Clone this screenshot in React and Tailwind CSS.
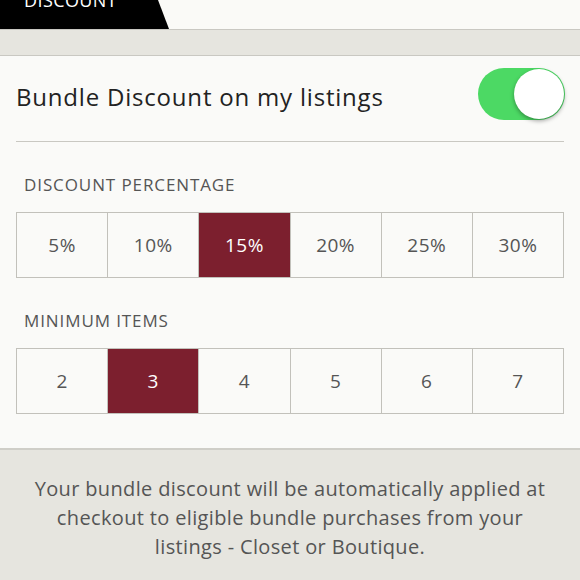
export default function App() {
  const percents = ["5%", "10%", "15%", "20%", "25%", "30%"];
  const items = ["2", "3", "4", "5", "6", "7"];

  const Segments = ({ options, selected }) => (
    <div className="mx-4 flex h-[66px] border border-[#c2c1bb]">
      {options.map((o, i) => (
        <div
          key={o}
          className={`flex flex-1 items-center justify-center text-[19px] tracking-[0.5px] ${
            i > 0 ? "border-l border-[#c2c1bb]" : ""
          } ${o === selected ? "bg-[#7c1f2e] text-white" : "text-[#555]"}`}
        >
          {o}
        </div>
      ))}
    </div>
  );

  return (
    <div
      className="h-[580px] w-[580px] overflow-hidden bg-[#e6e5df]"
      style={{ fontFamily: "'Open Sans', sans-serif" }}
    >
      {/* top tab strip */}
      <div className="relative h-[30px] bg-[#fafaf7] border-b border-[#c9c8c2]">
        <div
          className="absolute left-0 top-0 h-[29px] w-[169px] bg-black"
          style={{ clipPath: "polygon(0 0, 158px 0, 169px 100%, 0 100%)" }}
        />
        <div className="absolute left-[24px] top-[-13px] text-[18px] tracking-[0.4px] text-white">
          DISCOUNT
        </div>
      </div>

      <div className="h-[26px] border-b border-[#c9c8c2]" />

      {/* settings panel */}
      <div className="bg-[#fafaf8] border-b-2 border-[#cfcec8] pb-[34px]">
        <div className="mx-4 flex h-[86px] items-center justify-between border-b border-[#c9c8c2]">
          <span className="-mt-[3px] text-[24px] tracking-[0.8px] text-[#222]">
            Bundle Discount on my listings
          </span>
          <div className="relative mb-[10px] mr-[-1px] h-[52px] w-[87px] rounded-full bg-[#4cd964]">
            <div className="absolute right-[1px] top-[1px] h-[50px] w-[50px] rounded-full bg-white shadow-[0_2px_4px_rgba(0,0,0,0.35)]" />
          </div>
        </div>

        <div className="px-6 pb-[14px] pt-[30px] text-[17px] leading-[26px] tracking-[0.9px] text-[#555]">
          DISCOUNT PERCENTAGE
        </div>
        <Segments options={percents} selected="15%" />

        <div className="px-6 pb-[14px] pt-[30px] text-[17px] leading-[26px] tracking-[0.9px] text-[#555]">
          MINIMUM ITEMS
        </div>
        <Segments options={items} selected="3" />
      </div>

      <p className="pt-[24px] text-center text-[20px] leading-[29px] tracking-[0.35px] text-[#555]">
        Your bundle discount will be automatically applied at
        <br />
        checkout to eligible bundle purchases from your
        <br />
        listings - Closet or Boutique.
      </p>
    </div>
  );
}
